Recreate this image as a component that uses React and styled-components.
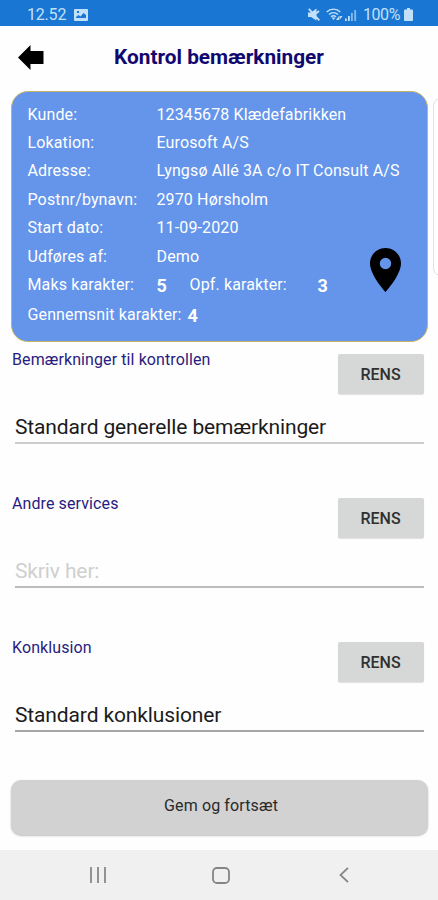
import React from "react";
import styled, { createGlobalStyle } from "styled-components";

const GlobalStyle = createGlobalStyle`
  * {
    box-sizing: border-box;
  }
  body {
    margin: 0;
    background-color: #fefefe;
    font-family: Roboto, "Liberation Sans", sans-serif;
  }
`;

const Screen = styled.div`
  display: flex;
  flex-direction: column;
  width: 438px;
  height: 900px;
  overflow: hidden;
  background-color: #fefefe;
`;

//status bar
const StatusBar = styled.div`
  display: flex;
  align-items: center;
  justify-content: space-between;
  height: 26px;
  padding: 3px 25px 0 27px;
  background-color: #1976d2;
  color: #c3e0fa;
  font-size: 16px;
  line-height: 22px;
`;

const StatusGroup = styled.div`
  display: flex;
  align-items: center;
  gap: ${(props) => props.gap};
`;

const StatusText = styled.span`
  letter-spacing: ${(props) => props.spacing || "0"};
`;

//header
const Header = styled.header`
  display: grid;
  grid-template-columns: 28px 1fr 28px;
  align-items: center;
  height: 65px;
  padding: 0 17px 3px;
`;

const Title = styled.h1`
  margin: 0;
  color: #11086f;
  font-size: 20.8px;
  font-weight: 700;
  text-align: center;
`;

const IconButton = styled.button`
  display: flex;
  padding: 0;
  border: none;
  background: none;
`;

//customer cards
const Carousel = styled.div`
  display: flex;
  flex-shrink: 0;
  gap: 5px;
  height: 251px;
  padding-left: 11px;
  overflow: hidden;
`;

const Card = styled.div`
  display: flex;
  flex-direction: column;
  flex: 0 0 417px;
  padding: 8px 16px 0 15.500px;
  border: 1px solid #c9b468;
  border-radius: 17px;
  background-color: #6495ea;
  color: #fff;
`;

const NextCard = styled.div`
  flex: 0 0 40px;
  height: 178px;
  margin-top: 7px;
  border: 1px solid #e2e2e2;
  border-radius: 8px;
  background-color: #fff;
`;

const Row = styled.div`
  display: grid;
  grid-template-columns: ${(props) => props.columns || "129px 1fr"};
  align-items: center;
  height: ${(props) => props.height || "28.4px"};
  font-size: 16px;
  letter-spacing: 0.13px;
  white-space: nowrap;
`;

const Score = styled.strong`
  padding-top: 2px;
  font-size: 18px;
  font-weight: 700;
`;

const CardBottom = styled.div`
  display: flex;
  justify-content: space-between;
`;

const PinButton = styled(IconButton)`
  align-self: flex-start;
  margin: 6px 10px 0 0;
`;

//comment fields
const Fields = styled.main`
  display: flex;
  flex-direction: column;
  padding: 8px 14px 0 12px;
`;

const Field = styled.section`
  display: flex;
  flex-direction: column;
  height: 144px;
`;

const FieldTop = styled.div`
  display: flex;
  align-items: flex-start;
  justify-content: space-between;
  padding-top: 4px;
`;

const Label = styled.label`
  margin-top: -4px;
  color: #291c80;
  font-size: 16px;
  line-height: 20px;
  letter-spacing: 0.1px;
`;

const ClearButton = styled.button`
  width: 86px;
  height: 40px;
  padding: 1px 1px 0 0;
  border: none;
  border-radius: 2px;
  background-color: #d6d8d7;
  box-shadow: 0 1px 1px rgba(0, 0, 0, 0.12);
  color: #303030;
  font-family: inherit;
  font-size: 16px;
  font-weight: 500;
`;

const Input = styled.input`
  height: 37px;
  margin: 13px 0 0 3px;
  padding: 4px 0 0;
  border: none;
  border-bottom: 2px solid ${(props) => props.$line};
  outline: none;
  background: none;
  color: #1b1b1b;
  font-family: inherit;
  font-size: 21px;
  letter-spacing: -0.13px;

  &::placeholder {
    color: #cfcfcf;
    opacity: 1;
  }
`;

const SaveButton = styled.button`
  flex-shrink: 0;
  height: 55px;
  margin: -2px 10px 0 11px;
  padding: 0 0 4px 3px;
  border: none;
  border-radius: 10px;
  background-color: #d2d2d2;
  box-shadow: 0 1px 2px rgba(0, 0, 0, 0.25);
  color: #2a2a2a;
  font-family: inherit;
  font-size: 16px;
  letter-spacing: 0.13px;
`;

//android navigation
const NavBar = styled.nav`
  display: grid;
  grid-template-columns: 123px 123px 123px;
  justify-content: center;
  justify-items: center;
  align-items: center;
  height: 50px;
  margin-top: auto;
  padding-left: 4px;
  background-color: #f0f0f0;
`;

const PictureIcon = () => (
  <svg width="14" height="12" viewBox="0 0 14 12">
    <path
      fillRule="evenodd"
      fill="#c3e0fa"
      d="M1 0h12a1 1 0 0 1 1 1v10a1 1 0 0 1-1 1H1a1 1 0 0 1-1-1V1a1 1 0 0 1 1-1zM2 9h10V6L9.500 4 6.500 7.500 4.500 6 2 8zM3 2v2h2V2z"
    />
  </svg>
);

const MuteIcon = () => (
  <svg width="12" height="13" viewBox="0 0 12 13">
    <path fill="#c3e0fa" d="M0 4.500h3L8.500.500v12L3 9H0z" />
    <path stroke="#c3e0fa" strokeWidth="1.800" d="M.8.800l10.500 11.500M8 5.500l3-2.500" />
  </svg>
);

const WifiIcon = () => (
  <svg width="17" height="13" viewBox="0 0 17 13" fill="none" stroke="#c3e0fa">
    <path strokeWidth="1.400" d="M.7 4C4.500.200 10.500.200 14.300 4M3 6.500c2.600-2.400 6.400-2.400 9 0M5 8.800c1.600-1.300 3.400-1.300 5 0" />
    <path fill="#c3e0fa" stroke="none" d="M7.500 12l-2-2.500h4zM10 12l3-4v4zM13.500 8h3l-3 4z" />
  </svg>
);

const SignalIcon = () => (
  <svg width="12" height="12" viewBox="0 0 12 12" fill="#c3e0fa">
    <path d="M0 9.500h1.800V12H0zM3 7h1.800v5H3z" />
    <path opacity=".65" d="M6 4h1.800v8H6zM9.300 1h1.800v11H9.300z" />
  </svg>
);

const BatteryIcon = () => (
  <svg width="9" height="13" viewBox="0 0 9 13">
    <path fill="#c3e0fa" d="M3 0h3v1.500h2a1 1 0 0 1 1 1V12a1 1 0 0 1-1 1H1a1 1 0 0 1-1-1V2.500a1 1 0 0 1 1-1h2z" />
  </svg>
);

const BackArrow = () => (
  <svg width="27" height="25" viewBox="0 0 27 25">
    <path d="M1 12.500L13.500 0v6H26.500v13H13.500v6z" />
  </svg>
);

const PinIcon = () => (
  <svg width="31" height="44" viewBox="0 0 31 44">
    <path
      fillRule="evenodd"
      d="M15.500 0C6.900 0 0 6.900 0 15.400 0 27 15.500 44 15.500 44S31 27 31 15.400C31 6.900 24.100 0 15.500 0zm0 9.800a5.700 5.700 0 1 1 0 11.400 5.700 5.700 0 0 1 0-11.400z"
    />
  </svg>
);

const details = [
  { label: "Kunde:", value: "12345678 Klædefabrikken" },
  { label: "Lokation:", value: "Eurosoft A/S" },
  { label: "Adresse:", value: "Lyngsø Allé 3A c/o IT Consult A/S" },
  { label: "Postnr/bynavn:", value: "2970 Hørsholm" },
  { label: "Start dato:", value: "11-09-2020" },
];

const fields = [
  {
    label: "Bemærkninger til kontrollen",
    value: "Standard generelle bemærkninger",
    line: "#cccccc",
  },
  { label: "Andre services", value: "", line: "#bdbdbd" },
  { label: "Konklusion", value: "Standard konklusioner", line: "#a6a6a6" },
];

const App = () => {
  return (
    <Screen>
      <GlobalStyle />
      <StatusBar>
        <StatusGroup gap="8px">
          <StatusText spacing="-0.2px">12.52</StatusText>
          <PictureIcon />
        </StatusGroup>
        <StatusGroup gap="6px">
          <MuteIcon />
          <StatusGroup gap="2px">
            <WifiIcon />
            <SignalIcon />
          </StatusGroup>
          <StatusGroup gap="4px">
            <StatusText spacing="-0.4px">100%</StatusText>
            <BatteryIcon />
          </StatusGroup>
        </StatusGroup>
      </StatusBar>

      <Header>
        <IconButton aria-label="Tilbage">
          <BackArrow />
        </IconButton>
        <Title>Kontrol bemærkninger</Title>
      </Header>

      <Carousel>
        <Card>
          {details.map((item) => (
            <Row key={item.label}>
              <span>{item.label}</span>
              <span>{item.value}</span>
            </Row>
          ))}
          <CardBottom>
            <div>
              <Row>
                <span>Udføres af:</span>
                <span>Demo</span>
              </Row>
              <Row columns="129px 33px 128px 20px">
                <span>Maks karakter:</span>
                <Score>5</Score>
                <span>Opf. karakter:</span>
                <Score>3</Score>
              </Row>
              <Row columns="160px 20px" height="31px">
                <span>Gennemsnit karakter:</span>
                <Score>4</Score>
              </Row>
            </div>
            <PinButton aria-label="Kort">
              <PinIcon />
            </PinButton>
          </CardBottom>
        </Card>
        <NextCard />
      </Carousel>

      <Fields>
        {fields.map((field) => (
          <Field key={field.label}>
            <FieldTop>
              <Label>{field.label}</Label>
              <ClearButton>RENS</ClearButton>
            </FieldTop>
            <Input
              defaultValue={field.value}
              placeholder="Skriv her:"
              $line={field.line}
            />
          </Field>
        ))}
      </Fields>

      <SaveButton>Gem og fortsæt</SaveButton>

      <NavBar>
        <svg width="18" height="16" viewBox="0 0 18 16" stroke="#929292" strokeWidth="2">
          <path d="M2 0v16M9 0v16M16 0v16" />
        </svg>
        <svg width="18" height="17" viewBox="0 0 18 17" fill="none" stroke="#858585" strokeWidth="1.800">
          <rect x="1" y="1" width="16" height="15" rx="4" />
        </svg>
        <svg width="10" height="16" viewBox="0 0 10 16" fill="none" stroke="#858585" strokeWidth="1.800">
          <path d="M9 .8L1.500 8 9 15.200" />
        </svg>
      </NavBar>
    </Screen>
  );
};

export default App;
